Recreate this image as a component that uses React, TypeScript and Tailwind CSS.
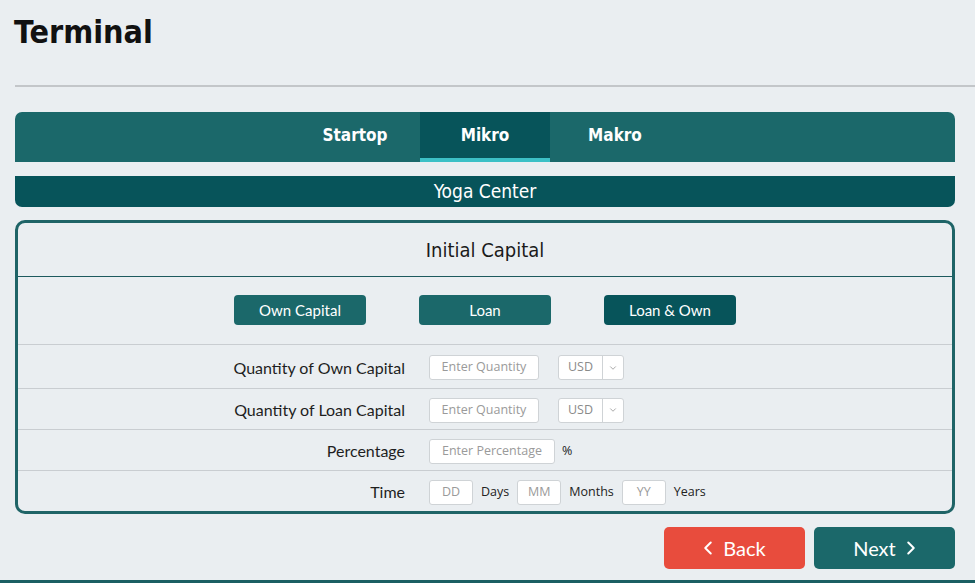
import { ChevronDown, ChevronLeft, ChevronRight } from "lucide-react";

const head = "font-['DejaVu_Sans_Condensed','DejaVu_Sans',sans-serif]";
const body = "font-['Lato','Open_Sans',sans-serif]";
const field = "font-['Open_Sans','Noto_Sans',sans-serif]";

const tabs = ["Startop", "Mikro", "Makro"];
const capitalTypes = [
  { label: "Own Capital", active: false },
  { label: "Loan", active: false },
  { label: "Loan & Own", active: true },
];

function TextBox({ placeholder, width }: { placeholder: string; width: string }) {
  return (
    <div
      className={`${width} flex h-[25px] items-center justify-center rounded-[3px] border border-[#cfd3d6] bg-white text-[12.5px] text-[#9a9a9a] ${field}`}
    >
      {placeholder}
    </div>
  );
}

function CurrencySelect() {
  return (
    <div
      className={`ml-[19px] flex h-[25px] w-[66px] items-center rounded-[3px] border border-[#cfd3d6] bg-white text-[12.5px] text-[#8a8a8a] ${field}`}
    >
      <span className="flex-1 text-center">USD</span>
      <span className="flex h-full w-[21px] items-center justify-center border-l border-[#cfd3d6]">
        <ChevronDown className="h-[10px] w-[10px] text-[#888]" strokeWidth={1.75} />
      </span>
    </div>
  );
}

function FormRow({
  label,
  children,
  height,
  last,
}: {
  label: string;
  children: React.ReactNode;
  height: string;
  last?: boolean;
}) {
  return (
    <div className={`flex ${height} items-center pt-[2px] ${last ? "" : "border-b border-[#c9cdd1]"}`}>
      <div className={`w-[387px] text-right text-[16px] text-[#1e1e1e] ${body}`}>{label}</div>
      <div className="ml-[24px] flex items-center">{children}</div>
    </div>
  );
}

export default function App() {
  return (
    <div className="relative h-[583px] w-[975px] overflow-hidden bg-[#eaeef1]">
      <div className="pr-[20px] pl-[15px]">
        <h1 className={`-ml-[1px] pt-[12px] text-[32px] leading-[40px] font-bold text-[#111] ${head}`}>Terminal</h1>
        <div className="mt-[33px] mr-[-20px] h-[2px] bg-[#c3c6c9]" />

        <div className={`mt-[25px] flex h-[50px] justify-center rounded-t-[7px] bg-[#1b686a] ${head}`}>
          {tabs.map((t) => (
            <div
              key={t}
              className={`relative flex w-[130px] items-center justify-center pb-[3px] text-[17px] font-bold text-white ${
                t === "Mikro" ? "bg-[#07545a]" : ""
              }`}
            >
              {t}
              {t === "Mikro" && <span className="absolute right-0 bottom-0 left-0 h-[4px] bg-[#3cc0c6]" />}
            </div>
          ))}
        </div>

        <div
          className={`mt-[14px] flex h-[31px] items-center justify-center rounded-b-[7px] bg-[#07545a] text-[19px] text-white ${head}`}
        >
          Yoga Center
        </div>

        <div className="mt-[13px] rounded-[10px] border-[3px] border-[#1f6467]">
          <div
            className={`flex h-[54px] items-center justify-center border-b border-[#1d5a5e] text-[20px] text-[#1a1a1a] ${head}`}
          >
            Initial Capital
          </div>
          <div className="flex h-[68px] items-center justify-center gap-[53px] border-b border-[#c9cdd1] pb-[1px]">
            {capitalTypes.map((c) => (
              <button
                key={c.label}
                type="button"
                className={`h-[30px] w-[132px] rounded-[4px] text-[15px] text-white ${body} ${
                  c.active ? "bg-[#07545a]" : "bg-[#1b686a]"
                }`}
              >
                {c.label}
              </button>
            ))}
          </div>
          <FormRow label="Quantity of Own Capital" height="h-[44px]">
            <TextBox placeholder="Enter Quantity" width="w-[110px]" />
            <CurrencySelect />
          </FormRow>
          <FormRow label="Quantity of Loan Capital" height="h-[41px]">
            <TextBox placeholder="Enter Quantity" width="w-[110px]" />
            <CurrencySelect />
          </FormRow>
          <FormRow label="Percentage" height="h-[41px]">
            <TextBox placeholder="Enter Percentage" width="w-[126px]" />
            <span className={`ml-[7px] text-[12.5px] text-[#222] ${field}`}>%</span>
          </FormRow>
          <FormRow label="Time" height="h-[40px]" last>
            <TextBox placeholder="DD" width="w-[44px]" />
            <span className={`mx-[8px] text-[12.5px] text-[#222] ${field}`}>Days</span>
            <TextBox placeholder="MM" width="w-[44px]" />
            <span className={`mx-[8px] text-[12.5px] text-[#222] ${field}`}>Months</span>
            <TextBox placeholder="YY" width="w-[44px]" />
            <span className={`ml-[8px] text-[12.5px] text-[#222] ${field}`}>Years</span>
          </FormRow>
        </div>

        <div className="mt-[13px] flex justify-end gap-[9px]">
          <button
            type="button"
            className={`flex h-[42px] w-[141px] items-center justify-center gap-[4px] rounded-[5px] bg-[#e84c3d] pr-[6px] text-[20px] text-white ${body}`}
          >
            <ChevronLeft className="h-[22px] w-[22px]" strokeWidth={2.2} />
            Back
          </button>
          <button
            type="button"
            className={`flex h-[42px] w-[141px] items-center justify-center gap-[4px] rounded-[5px] bg-[#1b686a] pl-[6px] text-[20px] text-white ${body}`}
          >
            Next
            <ChevronRight className="h-[22px] w-[22px]" strokeWidth={2.2} />
          </button>
        </div>
      </div>
      <div className="absolute right-0 bottom-0 left-0 h-[3px] bg-[#1b5f63]" />
    </div>
  );
}
